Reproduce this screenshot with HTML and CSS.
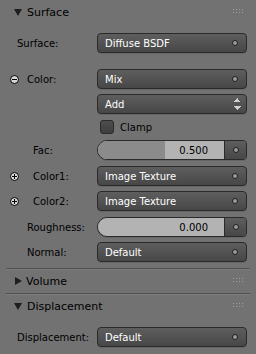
FILE: index.html
```html
<!DOCTYPE html>
<html lang="en">
  <head>
    <meta charset="UTF-8" />
    <title>Material Surface</title>
    <link rel="stylesheet" href="styles.css">
  </head>
  <body>
    <div class="panel">
      <div class="panel-header">
        <span class="arrow down"></span>
        <span class="title">Surface</span>
        <span class="grip"></span>
      </div>
      <div class="panel-body">
        <div class="row first">
          <div class="label pad-17">Surface:</div>
          <div class="menu">Diffuse BSDF<span class="socket"></span></div>
        </div>
        <div class="row spaced">
          <div class="label pad-27"><span class="node-icon minus"></span>Color:</div>
          <div class="menu">Mix<span class="socket"></span></div>
        </div>
        <div class="row">
          <div class="label"></div>
          <div class="menu">Add<span class="updown"></span></div>
        </div>
        <div class="row check-row">
          <div class="label"></div>
          <div class="check"><span class="box"></span>Clamp</div>
        </div>
        <div class="row">
          <div class="label pad-33">Fac:</div>
          <div class="slider">
            <div class="track"><div class="fill" style="width: 53%"></div><span class="value">0.500</span></div>
            <div class="slot"><span class="socket"></span></div>
          </div>
        </div>
        <div class="row wide">
          <div class="label pad-33"><span class="node-icon plus"></span>Color1:</div>
          <div class="menu">Image Texture<span class="socket"></span></div>
        </div>
        <div class="row">
          <div class="label pad-33"><span class="node-icon plus"></span>Color2:</div>
          <div class="menu">Image Texture<span class="socket"></span></div>
        </div>
        <div class="row wide">
          <div class="label pad-27">Roughness:</div>
          <div class="slider">
            <div class="track"><div class="fill" style="width: 0%"></div><span class="value">0.000</span></div>
            <div class="slot"><span class="socket"></span></div>
          </div>
        </div>
        <div class="row">
          <div class="label pad-27">Normal:</div>
          <div class="menu">Default<span class="socket"></span></div>
        </div>
      </div>
    </div>
    <div class="panel">
      <div class="panel-header">
        <span class="arrow right"></span>
        <span class="title">Volume</span>
        <span class="grip"></span>
      </div>
    </div>
    <div class="panel">
      <div class="panel-header">
        <span class="arrow down"></span>
        <span class="title">Displacement</span>
        <span class="grip"></span>
      </div>
      <div class="panel-body">
        <div class="row first">
          <div class="label pad-17">Displacement:</div>
          <div class="menu">Default<span class="socket"></span></div>
        </div>
      </div>
    </div>
  </body>
</html>
```

FILE: styles.css
```css
body {
  margin: 0;
  width: 256px;
  height: 354px;
  background: #727272;
  font-family: "DejaVu Sans", sans-serif;
  font-size: 10px;
  color: #000;
  overflow: hidden;
}
.panel {
  border-top: 1px solid #4f4f4f;
  box-shadow: inset 0 1px 0 #7e7e7e;
  margin: 0 6px 0 6px;
}
.panel:first-child {
  border-top: none;
  box-shadow: none;
}
.panel-header {
  display: flex;
  align-items: center;
  height: 24px;
  padding-left: 8px;
  padding-right: 6px;
  font-size: 11px;
}
.arrow {
  width: 0;
  height: 0;
  margin-right: 5px;
}
.arrow.down {
  border-left: 4px solid transparent;
  border-right: 4px solid transparent;
  border-top: 7px solid #1e1e1e;
}
.arrow.right {
  border-top: 4px solid transparent;
  border-bottom: 4px solid transparent;
  border-left: 7px solid #1e1e1e;
  margin-left: 1px;
  margin-right: 4px;
}
.title {
  flex: 1;
}
.grip {
  width: 11px;
  height: 6px;
  background-image: radial-gradient(circle, #a0a0a0 0.7px, transparent 0.9px);
  background-size: 3px 3px;
  background-position: -1px -1px;
  margin-bottom: 1px;
}
.panel-body {
  padding: 9px 3px 6px 0;
}
.row {
  display: flex;
  align-items: center;
  height: 20px;
  margin-top: 5px;
}
.row.first {
  margin-top: 0;
}
.row.spaced {
  margin-top: 16px;
}
.row.wide {
  margin-top: 6px;
}
.row.check-row {
  height: 16px;
  margin-top: 5px;
}
.label {
  width: 91px;
  display: flex;
  align-items: center;
  position: relative;
}
.pad-17 { padding-left: 11px; width: 80px; }
.pad-27 { padding-left: 21px; width: 70px; }
.pad-33 { padding-left: 27px; width: 64px; }
.node-icon {
  position: absolute;
  left: 4px;
  top: 50%;
  width: 7px;
  height: 7px;
  margin-top: -4px;
  border-radius: 50%;
  border: 1px solid #000;
  background: #d8d8d8;
}
.node-icon::before,
.node-icon.plus::after {
  content: "";
  position: absolute;
  left: 1px;
  top: 3px;
  width: 5px;
  height: 1px;
  background: #000;
}
.node-icon.plus::after {
  left: 3px;
  top: 1px;
  width: 1px;
  height: 5px;
}
.menu {
  flex: 1;
  height: 18px;
  display: flex;
  align-items: center;
  padding-left: 7px;
  border: 1px solid #2a2a2a;
  border-radius: 4px;
  background: linear-gradient(#5e5e5e, #474747);
  color: #fff;
  box-shadow: 0 1px 0 #666;
}
.socket {
  margin-left: auto;
  margin-right: 8px;
  width: 4px;
  height: 4px;
  border-radius: 50%;
  border: 1px solid #1e1e1e;
  background: #9a9a9a;
}
.updown {
  margin-left: auto;
  margin-right: 5px;
  width: 7px;
  height: 12px;
  background:
    linear-gradient(to bottom right, transparent 50%, #cfcfcf 50%) 0 0 / 4px 4px no-repeat,
    linear-gradient(to bottom left, transparent 50%, #cfcfcf 50%) 3px 0 / 4px 4px no-repeat,
    linear-gradient(to top right, transparent 50%, #cfcfcf 50%) 0 8px / 4px 4px no-repeat,
    linear-gradient(to top left, transparent 50%, #cfcfcf 50%) 3px 8px / 4px 4px no-repeat;
}
.check {
  display: flex;
  align-items: center;
  padding-left: 3px;
}
.box {
  width: 12px;
  height: 12px;
  border: 1px solid #2a2a2a;
  border-radius: 3px;
  background: linear-gradient(#4e4e4e, #3e3e3e);
  margin-right: 6px;
}
.slider {
  flex: 1;
  display: flex;
  height: 20px;
  border: 1px solid #2a2a2a;
  border-radius: 10px 4px 4px 10px;
  overflow: hidden;
  box-sizing: border-box;
  box-shadow: 0 1px 0 #666;
}
.track {
  flex: 1;
  position: relative;
  display: flex;
  align-items: center;
  justify-content: flex-end;
  background: #b3b3b3;
}
.fill {
  position: absolute;
  left: 0;
  top: 0;
  bottom: 0;
  background: #8b8b8b;
}
.value {
  position: relative;
  padding-right: 16px;
  color: #000;
}
.slot {
  width: 21px;
  display: flex;
  align-items: center;
  justify-content: center;
  border-left: 1px solid #2a2a2a;
  background: linear-gradient(#5e5e5e, #474747);
}
.slot .socket {
  margin: 0;
}
```
